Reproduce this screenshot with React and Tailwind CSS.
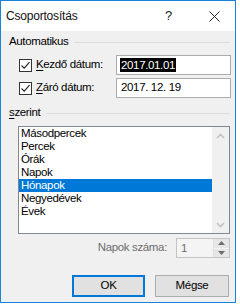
import React from 'react';

const items = ['Másodpercek', 'Percek', 'Órák', 'Napok', 'Hónapok', 'Negyedévek', 'Évek'];

const CheckBox = () => (
    <div className="w-[13px] h-[13px] border border-[#333333] bg-white flex items-center justify-center">
        <svg width="11" height="11" viewBox="0 0 11 11">
            <path d="M1.5 5.5 L4.2 8.2 L9.5 2.2" fill="none" stroke="#222" strokeWidth="1.1" />
        </svg>
    </div>
);

const GroupHeader = ({ children }) => (
    <div className="flex items-center h-[14px] pl-[8px] pr-[5px]">
        <span>{children}</span>
        <div className="flex-1 h-px bg-[#dcdcdc] ml-[6px]" />
    </div>
);

const Chevron = ({ up }) => (
    <svg width="9" height="6" viewBox="0 0 9 6">
        <path d={up ? 'M1 5 L4.5 1.5 L8 5' : 'M1 1 L4.5 4.5 L8 1'} fill="none" stroke="#c2c2c2" strokeWidth="1.6" />
    </svg>
);

const App = () => {
    return (
        <div className="w-[240px] h-[308px] bg-white font-['Liberation_Sans',Arial,sans-serif] text-[11.5px] tracking-[-0.35px] text-black">
            <div className="w-[236px] h-[303px] border border-[#1883d7] bg-[#f0f0f0] flex flex-col">
                {/* title bar */}
                <div className="h-[30px] bg-white flex items-center pl-[5px] pr-[15px]">
                    <span className="text-[12px] tracking-[-0.2px] text-[#111]">Csoportosítás</span>
                    <span className="ml-auto text-[13px] text-[#222] mr-[37px]">?</span>
                    <svg width="11" height="11" viewBox="0 0 11 11">
                        <path d="M0.5 0.5 L10.5 10.5 M10.5 0.5 L0.5 10.5" stroke="#222" strokeWidth="1" />
                    </svg>
                </div>

                <div className="mt-[4px]">
                    <GroupHeader>Automatikus</GroupHeader>
                </div>

                <div className="mt-[6px] flex flex-col gap-[3px]">
                    <div className="flex items-center pl-[18px]">
                        <CheckBox />
                        <span className="ml-[4px] w-[80px]">
                            <span className="underline underline-offset-2">K</span>ezdő dátum:
                        </span>
                        <div className="w-[115px] h-[20px] border border-[#acacac] bg-white flex items-center pl-[3px]">
                            <span className="bg-black text-white px-px leading-[14px]">2017.01.01</span>
                        </div>
                    </div>
                    <div className="flex items-center pl-[18px]">
                        <CheckBox />
                        <span className="ml-[4px] w-[80px]">
                            <span className="underline underline-offset-2">Z</span>áró dátum:
                        </span>
                        <div className="w-[115px] h-[20px] border border-[#acacac] bg-white flex items-center pl-[4px]">
                            <span>2017. 12. 19</span>
                        </div>
                    </div>
                </div>

                <div className="mt-[8px]">
                    <GroupHeader>
                        <span className="underline underline-offset-2">s</span>zerint
                    </GroupHeader>
                </div>

                <div className="mt-[6px] ml-[17px] w-[212px] h-[108px] border border-[#828790] bg-white flex">
                    <div className="w-[193px] flex flex-col">
                        {items.map((it) => (
                            <div
                                key={it}
                                className={
                                    it === 'Hónapok'
                                        ? 'h-[13px] leading-[13px] pl-[2px] bg-[#0078d7] text-white'
                                        : 'h-[13px] leading-[13px] pl-[2px]'
                                }
                            >
                                {it}
                            </div>
                        ))}
                    </div>
                    <div className="w-[17px] bg-[#f0f0f0] flex flex-col justify-between">
                        <div className="h-[17px] flex items-center justify-center">
                            <Chevron up />
                        </div>
                        <div className="h-[17px] flex items-center justify-center">
                            <Chevron />
                        </div>
                    </div>
                </div>

                <div className="mt-[4px] flex items-center justify-end pr-[5px]">
                    <span className="text-[#6d6d6d] mr-[9px]">Napok száma:</span>
                    <div className="w-[54px] h-[20px] border border-[#c4c4c4] bg-[#f4f4f4] flex">
                        <span className="flex-1 pl-[4px] leading-[18px] text-[#6d6d6d]">1</span>
                        <div className="w-[16px] flex flex-col gap-px bg-[#f4f4f4] border-l border-[#e0e0e0]">
                            <div className="flex-1 bg-[#e6e6e6] flex items-center justify-center">
                                <svg width="7" height="4" viewBox="0 0 7 4">
                                    <path d="M0 4 L3.5 0 L7 4 Z" fill="#6d6d6d" />
                                </svg>
                            </div>
                            <div className="flex-1 bg-[#e6e6e6] flex items-center justify-center">
                                <svg width="7" height="4" viewBox="0 0 7 4">
                                    <path d="M0 0 L3.5 4 L7 0 Z" fill="#6d6d6d" />
                                </svg>
                            </div>
                        </div>
                    </div>
                </div>

                <div className="mt-[17px] flex justify-end gap-[10px] pr-[6px]">
                    <button className="w-[73px] h-[22px] border-2 border-[#0078d7] bg-[#e1e1e1] text-[11.5px]">OK</button>
                    <button className="w-[74px] h-[22px] border border-[#adadad] bg-[#e1e1e1] text-[11.5px]">Mégse</button>
                </div>
            </div>
        </div>
    );
};

export default App;
